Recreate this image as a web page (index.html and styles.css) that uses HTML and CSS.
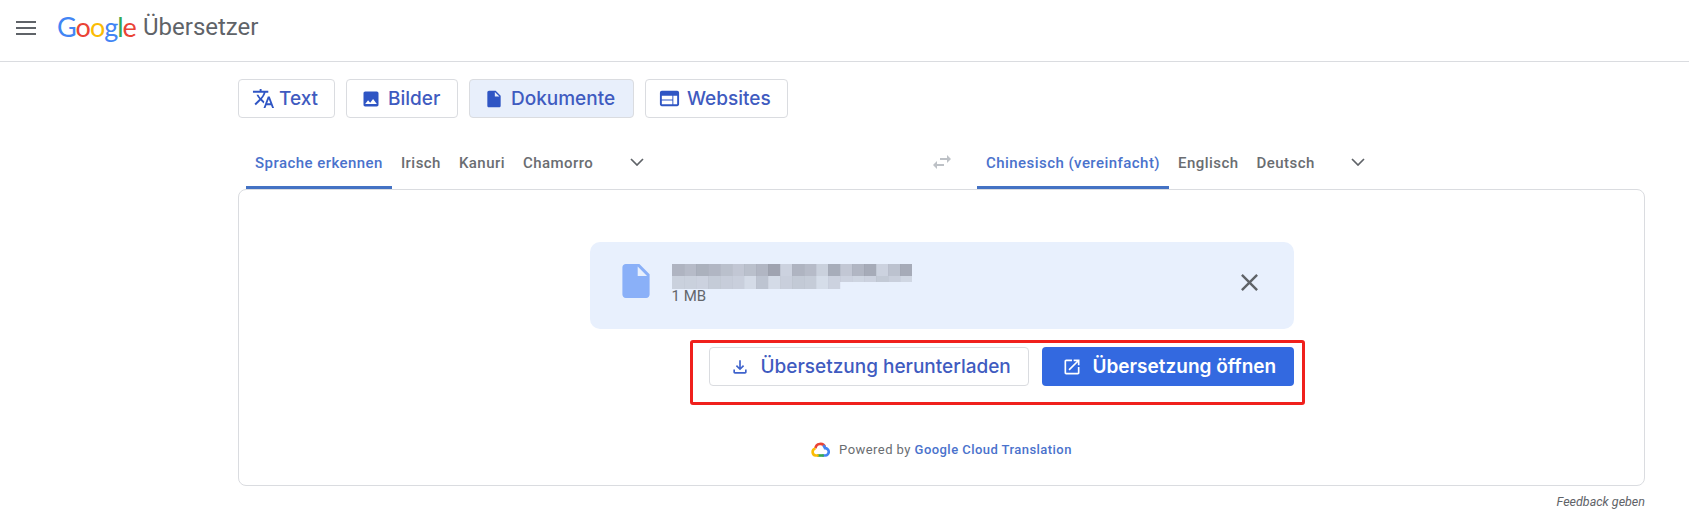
FILE: index.html
```html
<!DOCTYPE html>
<html lang="de">
<head><meta charset="UTF-8">
<meta name="viewport" content="width=device-width,initial-scale=1.0">
<title>Google Übersetzer</title>
<link rel="stylesheet" href="styles.css">
</head>
<body>

<header class="topbar">
  <svg class="menu-icon" viewBox="0 0 20 14"><path d="M0 0h20v2H0zM0 6h20v2H0zM0 12h20v2H0z"/></svg>
  <div class="logo"><span class="g-blue">G</span><span class="g-red">o</span><span class="g-yellow">o</span><span class="g-blue">g</span><span class="g-green">l</span><span class="g-red">e</span></div>
  <div class="product">Übersetzer</div>
</header>

<main class="page">
  <!-- mode buttons -->
  <nav class="modes">
    <button class="mode mode-text">
      <svg class="mode-icon translate" viewBox="0 0 24 24"><path d="M12.87 15.07l-2.54-2.51.03-.03c1.74-1.94 2.98-4.17 3.71-6.53H17V4h-7V2H8v2H1v1.99h11.17C11.5 7.92 10.44 9.75 9 11.35 8.07 10.32 7.3 9.19 6.69 8h-2c.73 1.63 1.73 3.17 2.98 4.56l-5.09 5.02L4 19l5-5 3.11 3.11.76-2.04zM18.5 10h-2L12 22h2l1.12-3h4.75L21 22h2l-4.5-12zm-2.62 7l1.62-4.33L19.12 17h-3.24z"/></svg>
      Text
    </button>
    <button class="mode mode-images">
      <svg class="mode-icon" viewBox="0 0 24 24"><path d="M21 19V5c0-1.1-.9-2-2-2H5c-1.1 0-2 .9-2 2v14c0 1.1.9 2 2 2h14c1.1 0 2-.9 2-2zM8.5 13.5l2.5 3.01L14.5 12l4.5 6H5l3.5-4.5z"/></svg>
      Bilder
    </button>
    <button class="mode mode-docs active">
      <svg class="mode-icon" viewBox="0 0 24 24"><path d="M14 2H6c-1.1 0-2 .9-2 2v16c0 1.1.9 2 2 2h12c1.1 0 2-.9 2-2V8l-6-6zm-1 7V3.5L18.5 9H13z"/></svg>
      Dokumente
    </button>
    <button class="mode mode-web">
      <svg class="mode-icon web-icon" viewBox="0 0 24 24"><path d="M20 4H4c-1.1 0-1.99.9-1.99 2L2 18c0 1.1.9 2 2 2h16c1.1 0 2-.9 2-2V6c0-1.1-.9-2-2-2zm-5 14H4v-4h11v4zm0-5H4V9h11v4zm5 5h-4V9h4v9z"/></svg>
      Websites
    </button>
  </nav>

  <!-- language row -->
  <div class="langs">
    <div class="lang-side">
      <span class="lang selected">Sprache erkennen</span>
      <span class="lang">Irisch</span>
      <span class="lang">Kanuri</span>
      <span class="lang">Chamorro</span>
      <svg class="chevron chev-left" viewBox="0 0 14 8"><path d="M1 1l6 6 6-6"/></svg>
    </div>
    <svg class="swap" viewBox="0 0 24 24"><path d="M6.99 11L3 15l3.99 4v-3H14v-2H6.99v-3zM21 9l-3.99-4v3H10v2h7.01v3L21 9z"/></svg>
    <div class="lang-side">
      <span class="lang selected">Chinesisch (vereinfacht)</span>
      <span class="lang">Englisch</span>
      <span class="lang">Deutsch</span>
      <svg class="chevron chev-right" viewBox="0 0 14 8"><path d="M1 1l6 6 6-6"/></svg>
    </div>
  </div>

  <section class="card">
    <div class="doc-col">
      <div class="file-box">
        <svg class="file-icon" viewBox="4 2 16 20"><path d="M14 2H6c-1.1 0-2 .9-2 2v16c0 1.1.9 2 2 2h12c1.1 0 2-.9 2-2V8l-6-6zm-1 7V3.5L18.5 9H13z"/></svg>
        <div class="file-info">
          <svg class="mosaic" viewBox="0 0 240 25" id="mosaic"></svg>
          <div class="file-size">1 MB</div>
        </div>
        <svg class="close-icon" viewBox="0 0 24 24"><path d="M19 6.41L17.59 5 12 10.59 6.41 5 5 6.41 10.59 12 5 17.59 6.41 19 12 13.41 17.59 19 19 17.59 13.41 12z"/></svg>
      </div>

      <div class="actions">
        <button class="btn btn-outline">
          <svg class="btn-icon" viewBox="0 0 24 24"><path d="M18 15v3H6v-3H4v3c0 1.1.9 2 2 2h12c1.1 0 2-.9 2-2v-3h-2zm-1-4l-1.41-1.41L13 12.17V4h-2v8.17L8.41 9.59 7 11l5 5 5-5z"/></svg>
          Übersetzung herunterladen
        </button>
        <button class="btn btn-solid">
          <svg class="btn-icon" viewBox="0 0 24 24"><path d="M19 19H5V5h7V3H5c-1.11 0-2 .9-2 2v14c0 1.1.89 2 2 2h14c1.1 0 2-.9 2-2v-7h-2v7zM14 3v2h3.59l-9.83 9.83 1.41 1.41L19 6.41V10h2V3h-7z"/></svg>
          Übersetzung öffnen
        </button>
        <div class="highlight"></div>
      </div>

      <div class="powered">
        <svg class="cloud" viewBox="0 0 20 16" fill="none" stroke-width="2.8">
          <path stroke="#ea4335" d="M4.6 6.9A5.3 5.3 0 0 1 14.8 5.4"/>
          <path stroke="#4285f4" d="M12.9 3.6A5.3 5.3 0 0 1 14.8 6.6 3.7 3.7 0 0 1 15 14.4H12"/>
          <path stroke="#34a853" d="M13.5 14.4H6.5"/>
          <path stroke="#fbbc04" d="M8 14.4H5A3.8 3.8 0 0 1 4.6 6.9"/>
        </svg>
        <span>Powered by <a class="powered-link">Google Cloud Translation</a></span>
      </div>
    </div>
  </section>

  <div class="feedback">Feedback geben</div>
</main>

<script>
/* blurred file name, one row of dark cells and one of light */
const upperRow = [.62,.55,.66,.6,.5,.42,.5,.6,.8,.3,.62,.55,.32,.7,.42,.6,.72,.3,.48,.72];
const lowerRow = [.2,.2,.18,.26,.24,.22,.1,.34,.1,.22,.28,.26,.08,.18,.18,.16,.18,.28,.22,.14];
let cells = '';
upperRow.forEach((v, i) => { cells += `<rect x="${i*12}" y="0" width="12.2" height="12" fill="#8c909c" opacity="${v}"/>`; });
lowerRow.forEach((v, i) => { cells += `<rect x="${i*12}" y="12" width="12.2" height="${i < 14 ? 13 : 6}" fill="#8c909c" opacity="${v + .12}"/>`; });
document.getElementById('mosaic').innerHTML = cells;
</script>
</body>
</html>
```

FILE: styles.css
```css
*,*::before,*::after{box-sizing:border-box;margin:0;padding:0}
body{
  background:#fff;
  font-family:'Roboto',sans-serif;
  color:#5f6368;
}

/* === TOP BAR === */
.topbar{
  height:62px;
  display:flex;
  align-items:center;
  padding:0 0 7px 16px;
  border-bottom:1px solid #dadce0;
}
.menu-icon{width:20px;height:14px;fill:#5f6368;margin:2px 21px 0 0}
.logo{
  font-family:'Lato',sans-serif;
  font-size:27px;
  letter-spacing:-1px;
  width:86px;
  margin-top:-2px;
}
.g-blue{color:#4285f4}
.g-red{color:#ea4335}
.g-yellow{color:#fbbc04}
.g-green{color:#34a853}
.product{font-size:24px;color:#5f6368}

/* === PAGE === */
.page{width:1407px;margin-left:238px}

/* === MODE BUTTONS === */
.modes{display:flex;gap:11px;padding-top:17px}
.mode{
  height:39px;
  display:flex;
  align-items:center;
  border:1px solid #dadce0;
  border-radius:4px;
  background:#fff;
  color:#3f5bc0;
  font:500 19px 'Inter',sans-serif;
}
.mode-text{width:97px;padding-left:13px;gap:4px}
.mode-images{width:112px;padding-left:14px;gap:7px}
.mode-docs{width:165px;padding-left:14px;gap:7px}
.mode-web{width:143px;padding-left:12px;gap:6px}
.mode.active{background:#e8effb}
.mode-icon{width:20px;height:20px;fill:#2f55c4;flex:none}
.translate,.web-icon{width:23px;height:23px}

/* === LANGUAGE ROW === */
.langs{
  display:grid;
  grid-template-columns:690px 41px 1fr;
  align-items:center;
  height:71px;
  padding-top:22px;
}
.lang-side{display:flex;height:49px;padding-left:8px}
.lang{
  display:flex;
  align-items:center;
  padding:0 9px 4px;
  font-size:15px;
  font-weight:500;
  letter-spacing:.45px;
  color:#6a6d71;
  white-space:nowrap;
}
.lang.selected{
  color:#4a72cc;
  box-shadow:inset 0 -3px 0 #4472c4;
}
.chevron{
  width:14px;
  height:8px;
  fill:none;
  stroke:#5f6368;
  stroke-width:1.7;
  align-self:center;
  margin-bottom:5px;
}
.chev-left{margin-left:28px}
.chev-right{margin-left:27px}
.swap{width:24px;height:24px;fill:#bdc1c6;margin:0 0 5px 2px}

/* === CARD === */
.card{
  height:297px;
  border:1px solid #dadce0;
  border-radius:8px;
  padding-top:52px;
}
.doc-col{width:704px;margin:0 auto}
.file-box{
  height:87px;
  display:flex;
  align-items:flex-start;
  padding:22px 0 0 32px;
  background:#e8f0fd;
  border-radius:10px;
}
.file-icon{width:28px;height:34px;fill:#8ab0f8;margin-right:22px;flex:none}
.file-info{width:240px}
.mosaic{display:block;width:240px;height:25px}
.file-size{font-size:15px;line-height:14px;color:#63666b}
.close-icon{width:29px;height:29px;fill:#5f6368;margin:4px 0 0 323px}

/* === ACTIONS === */
.actions{
  position:relative;
  display:flex;
  justify-content:flex-end;
  gap:13px;
  margin-top:18px;
}
.btn{
  height:39px;
  display:flex;
  align-items:center;
  border-radius:4px;
  font:500 19px 'Inter',sans-serif;
  white-space:nowrap;
}
.btn-outline{
  width:320px;
  padding-left:20px;
  gap:11px;
  background:#fff;
  border:1px solid #dadce0;
  color:#3f5bc0;
}
.btn-solid{
  width:252px;
  padding-left:20px;
  gap:11px;
  background:#3369e0;
  border:0;
  color:#fff;
  font-weight:600;
}
.btn-icon{width:20px;height:20px;fill:currentColor;flex:none}
.btn-outline .btn-icon{fill:#3f63cc}
.highlight{
  position:absolute;
  top:-7px;
  right:-11px;
  width:615px;
  height:65px;
  border:3px solid #f0201c;
  border-radius:3px;
}

/* === POWERED BY === */
.powered{
  display:flex;
  align-items:center;
  justify-content:center;
  gap:9px;
  margin-top:56px;
  font-size:13px;
  letter-spacing:.45px;
  color:#6a6d71;
}
.cloud{width:19px;height:15px}
.powered-link{color:#4a72cc;font-weight:500}

/* === FEEDBACK === */
.feedback{
  text-align:right;
  padding-top:8px;
  font-size:12.5px;
  font-style:italic;
  color:#5f6368;
}
```
